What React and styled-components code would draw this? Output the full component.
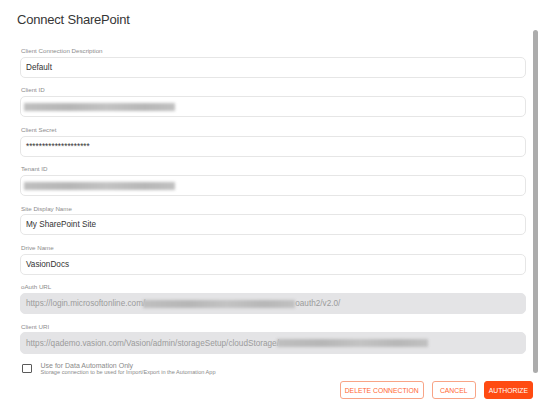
import React from "react";
import styled, { createGlobalStyle } from "styled-components";

const fields = [
  { label: "Client Connection Description", value: "Default" },
  { label: "Client ID", redacted: 151 },
  { label: "Client Secret", value: "********************" },
  { label: "Tenant ID", redacted: 151 },
  { label: "Site Display Name", value: "My SharePoint Site" },
  { label: "Drive Name", value: "VasionDocs" },
  {
    label: "oAuth URL",
    disabled: true,
    before: "https://login.microsoftonline.com/",
    redacted: 152,
    after: "oauth2/v2.0/",
  },
  {
    label: "Client URI",
    disabled: true,
    before: "https://qademo.vasion.com/Vasion/admin/storageSetup/cloudStorage/",
    redacted: 151,
  },
];

const ConnectSharePoint = () => {
  return (
    <Dialog>
      <GlobalStyle />
      <Title>Connect SharePoint</Title>
      <Body>
        <Form>
          {fields.map((field) => (
            <Field key={field.label}>
              <Label>{field.label}</Label>
              <Input $disabled={field.disabled}>
                {field.before}
                {field.value}
                {field.redacted && <Redacted $width={field.redacted} />}
                {field.after}
              </Input>
            </Field>
          ))}
          <CheckRow>
            <CheckBox />
            <CheckText>
              <CheckTitle>Use for Data Automation Only</CheckTitle>
              <CheckHint>
                Storage connection to be used for Import/Export in the Automation App
              </CheckHint>
            </CheckText>
          </CheckRow>
        </Form>
        <ScrollTrack />
      </Body>
      <Footer>
        <Button>DELETE CONNECTION</Button>
        <Button>CANCEL</Button>
        <Button $primary>AUTHORIZE</Button>
      </Footer>
    </Dialog>
  );
};

export default ConnectSharePoint;

// Styled Components
const GlobalStyle = createGlobalStyle`
  body {
    margin: 0;
    background: #ffffff;
    font-family: "Liberation Sans", Arial, sans-serif;
  }
`;

const Dialog = styled.div`
  width: 550px;
  height: 414px;
  display: flex;
  flex-direction: column;
  background: #ffffff;
  overflow: hidden;
`;

const Title = styled.h2`
  margin: 11.5px 0 0 17px;
  font-size: 13px;
  line-height: 16px;
  font-weight: normal;
  letter-spacing: -0.2px;
  color: #363636;
`;

const Body = styled.div`
  display: flex;
  gap: 7px;
  margin-top: 2.5px;
  padding: 0 12px 0 20px;
`;

const Form = styled.div`
  flex: 1;
  display: flex;
  flex-direction: column;
  gap: 8.4px;
  padding-top: 17px;
`;

const Field = styled.div`
  display: flex;
  flex-direction: column;
  gap: 1.8px;
`;

const Label = styled.label`
  font-size: 6.2px;
  line-height: 8px;
  color: #8c8c8c;
  padding-left: 1px;
`;

const Input = styled.div`
  height: 21.2px;
  box-sizing: border-box;
  display: flex;
  align-items: center;
  padding: 0 5px;
  border: 1px solid ${(p) => (p.$disabled ? "#e4e4e6" : "#e6e6e6")};
  border-radius: 5px;
  background: ${(p) => (p.$disabled ? "#e4e4e6" : "#ffffff")};
  color: ${(p) => (p.$disabled ? "#9b9b9b" : "#333333")};
  font-size: 8.2px;
  white-space: nowrap;
  overflow: hidden;
`;

const Redacted = styled.span`
  display: inline-block;
  flex-shrink: 0;
  width: ${(p) => p.$width}px;
  height: 8px;
  margin-left: -2px;
  background: linear-gradient(
    90deg,
    #bfbfbf 0%,
    #b6b6b6 30%,
    #c3c3c3 55%,
    #b7b7b7 80%,
    #c1c1c1 100%
  );
  filter: blur(1.5px);
`;

const CheckRow = styled.div`
  display: flex;
  align-items: center;
  gap: 9px;
  padding-left: 2px;
`;

const CheckBox = styled.span`
  width: 9.5px;
  height: 9.5px;
  box-sizing: border-box;
  border: 1.2px solid #5a5a5a;
  border-radius: 1px;
`;

const CheckText = styled.div`
  display: flex;
  flex-direction: column;
`;

const CheckTitle = styled.span`
  font-size: 7px;
  line-height: 7.5px;
  color: #8a8a8a;
`;

const CheckHint = styled.span`
  font-size: 5.6px;
  line-height: 5.5px;
  color: #8a8a8a;
`;

const ScrollTrack = styled.div`
  width: 5px;
  margin-bottom: 2px;
  border-radius: 2.5px;
  background: #acacac;
`;

const Footer = styled.div`
  display: flex;
  justify-content: flex-end;
  gap: 8px;
  padding: 6px 17px 0 0;
`;

const Button = styled.button`
  height: 18px;
  min-width: 44px;
  padding: 0 4px;
  box-sizing: border-box;
  border-radius: 3px;
  border: 1px solid ${(p) => (p.$primary ? "#ff4b12" : "#f8a486")};
  background: ${(p) => (p.$primary ? "#ff4b12" : "#ffffff")};
  color: ${(p) => (p.$primary ? "#ffffff" : "#ff6633")};
  font-family: "Liberation Sans", Arial, sans-serif;
  font-size: 6.8px;
  cursor: pointer;
`;
